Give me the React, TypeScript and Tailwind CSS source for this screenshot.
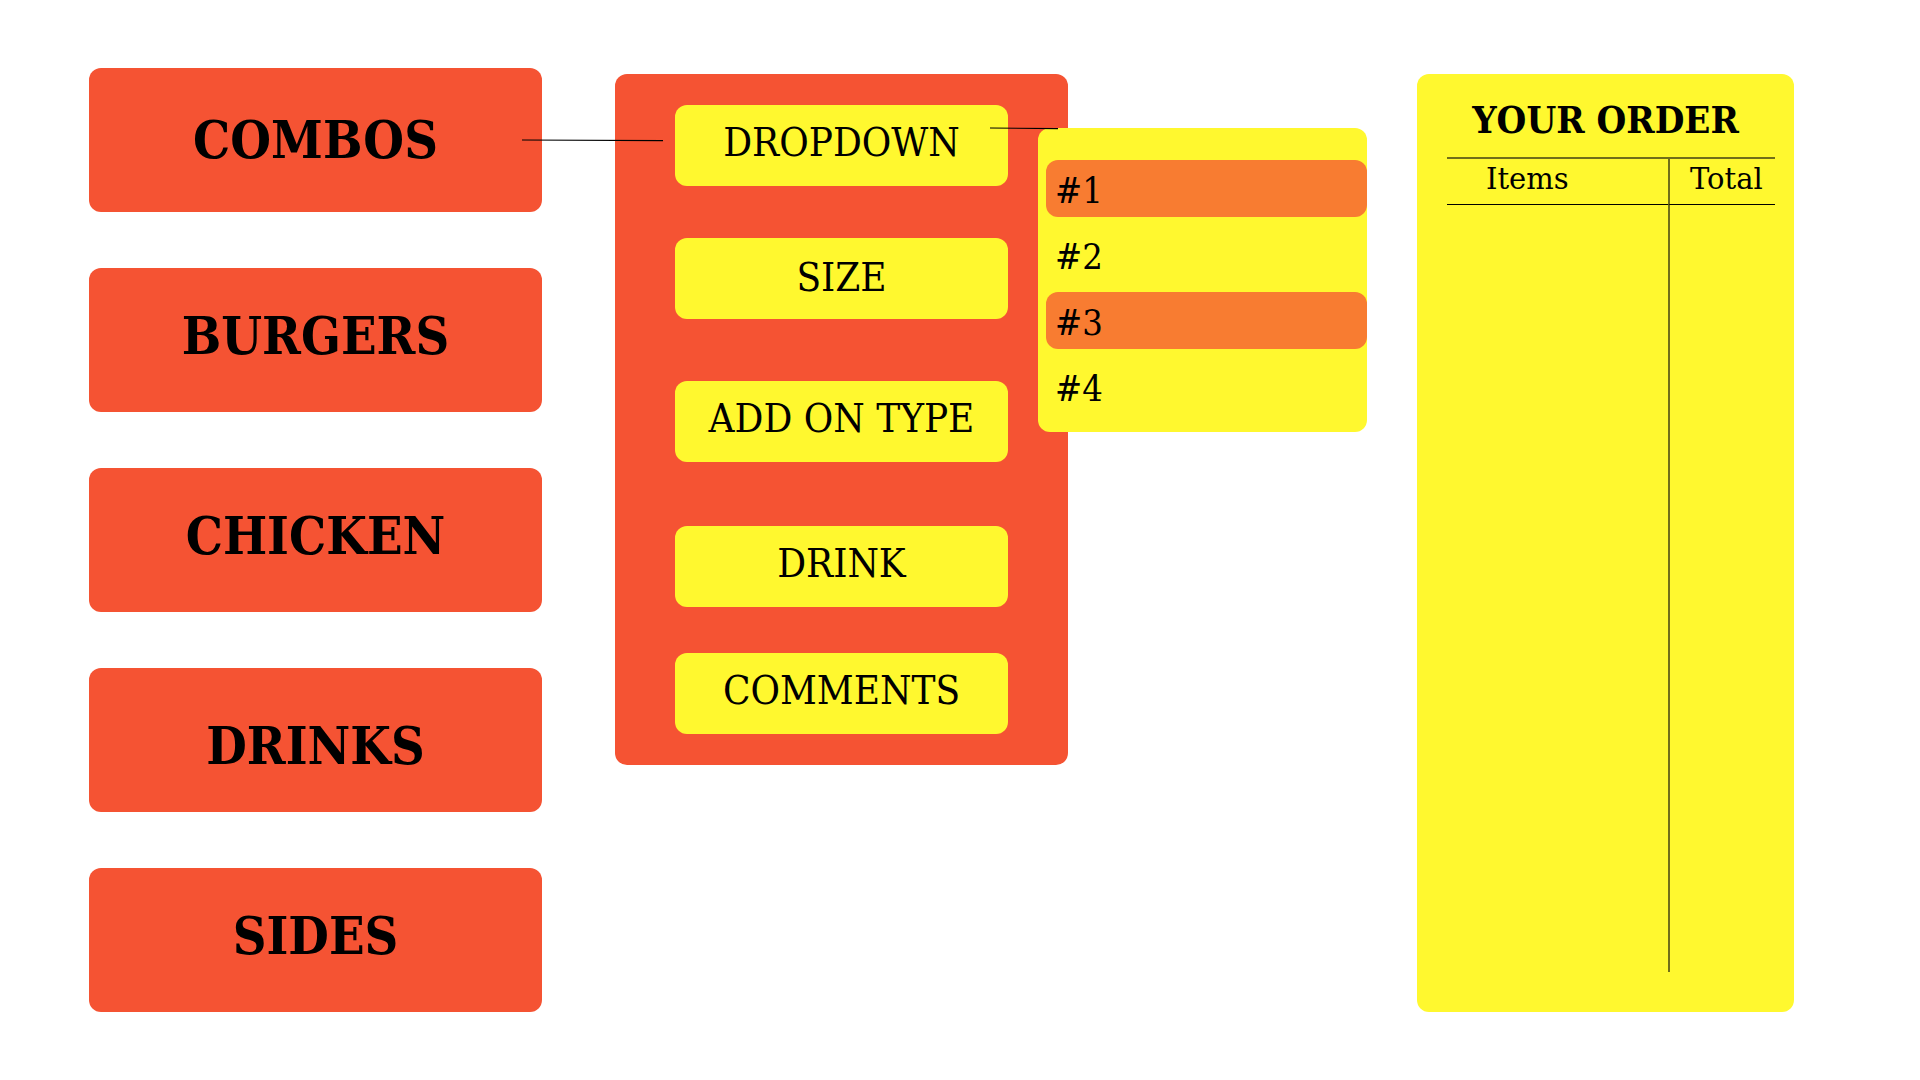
const categories = [
  { name: "COMBOS", inset: "pb-0" },
  { name: "BURGERS", inset: "pb-2" },
  { name: "CHICKEN", inset: "pb-2" },
  { name: "DRINKS", inset: "pt-3" },
  { name: "SIDES", inset: "pb-2" },
];

const fields = [
  { name: "DROPDOWN", gap: "mt-0", inset: "pb-2" },
  { name: "SIZE", gap: "mt-[52px]", inset: "pb-1" },
  { name: "ADD ON TYPE", gap: "mt-[62px]", inset: "pb-2" },
  { name: "DRINK", gap: "mt-[64px]", inset: "pb-2" },
  { name: "COMMENTS", gap: "mt-[46px]", inset: "pb-2" },
];

const options = [
  { name: "#1", color: "bg-[#f87c31]" },
  { name: "#2", color: "bg-transparent" },
  { name: "#3", color: "bg-[#f87c31]" },
  { name: "#4", color: "bg-transparent" },
];

function Categories() {
  return (
    <nav aria-label="Menu categories" className="flex flex-col gap-14">
      {categories.map((c, i) => (
        <div key={c.name} className="relative">
          <button
            type="button"
            className={`flex h-36 w-full items-center justify-center rounded-xl bg-[#f55333] text-[52px] leading-none font-bold ${c.inset}`}
          >
            {c.name}
          </button>
          {i === 0 && (
            <svg
              aria-hidden="true"
              className="pointer-events-none absolute top-[71px] left-[433px] z-10 h-[3px] w-[141px]"
              viewBox="0 0 141 3"
            >
              <line x1="0" y1="1" x2="141" y2="1.6" stroke="#000" strokeWidth="1.2" />
            </svg>
          )}
        </div>
      ))}
    </nav>
  );
}

function OptionList() {
  return (
    <ul className="absolute top-[54px] left-[423px] flex w-[329px] flex-col gap-[9px] rounded-xl bg-[#fff82f] pt-8 pb-[17px] pl-2">
      {options.map((o) => (
        <li key={o.name}>
          <button
            type="button"
            className={`flex h-[57px] w-full items-center rounded-xl pt-1 pl-[9px] text-[36px] leading-none ${o.color}`}
          >
            {o.name}
          </button>
        </li>
      ))}
    </ul>
  );
}

function Customizer() {
  return (
    <section
      aria-label="Customize item"
      className="relative col-start-3 mt-1.5 self-start rounded-xl bg-[#f55333] px-[60px] py-[31px]"
    >
      {fields.map((f) => (
        <button
          key={f.name}
          type="button"
          className={`flex h-[81px] w-full items-center justify-center rounded-xl bg-[#fff82f] text-[40px] leading-none whitespace-nowrap ${f.gap} ${f.inset}`}
        >
          {f.name}
        </button>
      ))}
      <OptionList />
      <svg
        aria-hidden="true"
        className="pointer-events-none absolute top-[53px] left-[375px] z-10 h-[3px] w-[68px]"
        viewBox="0 0 68 3"
      >
        <line x1="0" y1="1" x2="68" y2="1.6" stroke="#000" strokeWidth="1.2" />
      </svg>
    </section>
  );
}

function Order() {
  return (
    <section
      aria-label="Your order"
      className="col-start-5 mt-1.5 flex flex-col rounded-xl bg-[#fff82f] pt-7 pb-10"
    >
      <h1 className="h-[55px] text-center text-[38px] leading-[36px] font-bold whitespace-nowrap">
        YOUR ORDER
      </h1>
      <div className="flex grow pr-[19px] pl-[30px]">
        <table className="w-full border-separate border-spacing-0">
          <thead>
            <tr className="h-12 text-left font-['DejaVu_Serif',serif] text-[29px] leading-none">
              <th className="border-t-2 border-b border-t-[#716e18] border-b-black p-0 pb-1 pl-[39px] font-normal">
                Items
              </th>
              <th className="w-[107px] border-t-2 border-b border-l-2 border-t-[#716e18] border-b-black border-l-[#716e18] p-0 pb-1 pl-5 font-normal">
                Total
              </th>
            </tr>
          </thead>
          <tbody>
            <tr>
              <td />
              <td className="border-l-2 border-[#716e18]" />
            </tr>
          </tbody>
        </table>
      </div>
    </section>
  );
}

export default function App() {
  return (
    <main className="grid min-h-screen grid-cols-[453fr_73fr_453fr_349fr_377fr] bg-white pt-[68px] pr-[126px] pb-[68px] pl-[89px] font-['DejaVu_Serif_Condensed','DejaVu_Serif',serif] text-black">
      <Categories />
      <Customizer />
      <Order />
    </main>
  );
}
